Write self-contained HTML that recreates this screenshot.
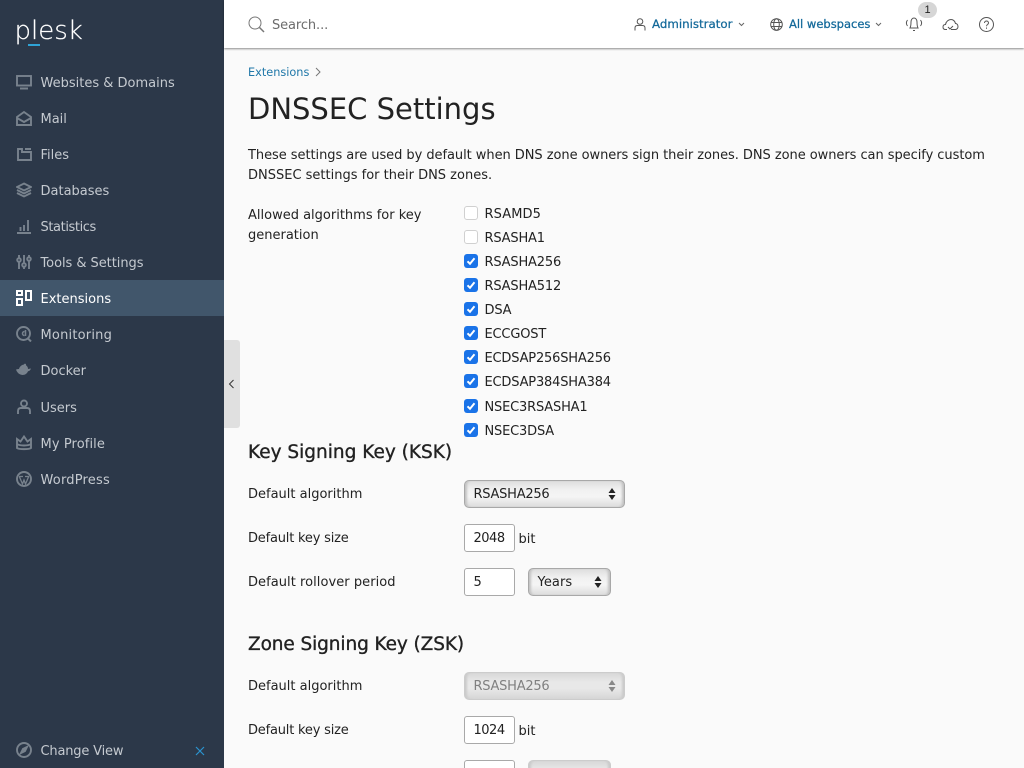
<!DOCTYPE html>
<html lang="en"><head><meta charset="utf-8"><title>DNSSEC Settings</title>
<style>
html,body{margin:0;padding:0;width:1024px;height:768px;overflow:hidden;background:#fafafa}
body{position:relative;font-family:"DejaVu Sans","Liberation Sans",sans-serif;font-size:13px;color:#222}
.t{position:absolute;white-space:nowrap;line-height:20px;height:20px}
#side{position:absolute;left:0;top:0;width:224px;height:768px;background:#2c3849}
#active{position:absolute;left:0;top:280px;width:224px;height:36px;background:#41566b}
.n{left:40.5px;color:#c5cad0;font-size:13px;margin-top:2px}
.i{position:absolute;left:16px;width:16px;height:16px;fill:none;stroke:#78828d;stroke-width:1.9}
#hdr{position:absolute;left:224px;top:0;width:800px;height:48px;background:#fff;box-shadow:0 1px 2px rgba(0,0,0,.45)}
#handle{position:absolute;left:224px;top:340px;width:16px;height:88px;background:#e0e0e0;border-radius:0 3px 3px 0}
.l{left:248px;margin-top:1px}
.p{margin-top:2px}
.cb{position:absolute;left:464px;width:14px;height:14px;border-radius:3px;background:#1a73e8}
.cb.o{background:#fff;box-sizing:border-box;border:1px solid #d0d0d0}
.cb svg{position:absolute;left:0;top:0;width:14px;height:14px}
.a{left:484.5px;margin-top:2px;letter-spacing:-.18px}
.v{margin-top:1px;letter-spacing:-.25px}
.sel{position:absolute;box-sizing:border-box;height:28px;border:1px solid #a8a8a8;border-radius:5px;background:linear-gradient(#dedede,#f1f1f1 35%,#f5f5f5 60%,#dcdcdc);box-shadow:inset 3px 0 2px -1px #c2c2c2,inset -3px 0 2px -1px #c2c2c2}
.sel svg{position:absolute;right:8px;top:7px;width:8px;height:12px}
.sel.d{border-color:#ccc;background:linear-gradient(#d8d8d8,#e8e8e8 35%,#e8e8e8 60%,#d6d6d6);box-shadow:inset 3px 0 2px -1px #cacaca,inset -3px 0 2px -1px #cacaca}
.inp{position:absolute;left:464px;width:51px;height:28px;box-sizing:border-box;background:#fff;border:1px solid #a9a9a9;border-radius:3px}
h1,h2{margin:0;font-weight:400;position:absolute;white-space:nowrap}
h1{left:248px;top:89px;font-size:29px;line-height:40px;color:#222}
h2{left:248px;font-size:18.5px;line-height:26px;color:#222;-webkit-text-stroke:.35px #222}
</style></head><body>
<div id="side">
<div style="position:absolute;left:28px;top:44px;width:12px;height:2px;background:#2fa3d6"></div>
<div class="t" style="left:14.5px;top:11px;height:40px;line-height:40px;font-size:26px;color:#fff;letter-spacing:0;font-family:'DejaVu Sans Light','Liberation Sans',sans-serif;font-weight:200;-webkit-text-stroke:.2px #fff">plesk</div>
<div id="active"></div>
<svg class="i" style="top:74px" viewBox="0 0 16 16"><rect x="1" y="2" width="14" height="9.5"/><path d="M4 14.500h8" stroke-width="2"/></svg>
<div class="t n" style="top:72px">Websites &amp; Domains</div>
<svg class="i" style="top:110px" viewBox="0 0 16 16"><path d="M1 7 8 2l7 5v8H1zM1 8l7 4 7-4"/></svg>
<div class="t n" style="top:108px">Mail</div>
<svg class="i" style="top:146px" viewBox="0 0 16 16"><path d="M2 3h4v3h9v8H2zM9 3h6"/></svg>
<div class="t n" style="top:144px">Files</div>
<svg class="i" style="top:182px" viewBox="0 0 16 16"><path d="M8 1.500 15 5l-7 3.500L1 5zM1 8l7 3.500L15 8M1 11l7 3.500 7-3.500"/></svg>
<div class="t n" style="top:180px">Databases</div>
<svg class="i" style="top:218px" viewBox="0 0 16 16"><path d="M1 15h14M4.500 13V9M8 13V7M12 13V2"/></svg>
<div class="t n" style="top:216px;letter-spacing:-.4px">Statistics</div>
<svg class="i" style="top:254px" viewBox="0 0 16 16"><path d="M3 1v3M3 8v7M8 1v8M8 13v2M13 1v2M13 7v8"/><circle cx="3" cy="6" r="1.800"/><circle cx="8" cy="11" r="1.800"/><circle cx="13" cy="5" r="1.800"/></svg>
<div class="t n" style="top:252px;letter-spacing:-.05px">Tools &amp; Settings</div>
<svg class="i" style="top:290px;stroke:#fff;stroke-width:2" viewBox="0 0 16 16"><rect x="1" y="1" width="5" height="4"/><rect x="1" y="9" width="5" height="6"/><rect x="10" y="1" width="5" height="9"/></svg>
<div class="t n" style="top:288px;color:#fff">Extensions</div>
<svg class="i" style="top:326px" viewBox="0 0 16 16"><circle cx="7.500" cy="7.500" r="6.500"/><path d="M11.500 12l3.500 3.500" stroke-width="2"/><path d="M9.500 4v6M8.500 5.500a2 2 0 1 0 0 4" stroke-width="1.500"/></svg>
<div class="t n" style="top:324px;letter-spacing:.2px">Monitoring</div>
<svg class="i" style="top:362px;stroke:none;fill:#78828d" viewBox="0 0 16 16"><path d="M0 7.500c2-.5 2.500-.5 3-.5.500-2 2-4 5-4.500V1.500l1 .8 1-.8v1.800c1.500 1 2 2.500 2 3.700l3-.5c-.5 1.500-1.500 2.500-3 2.800-1 2.500-3 3.700-5.500 3.700C3 12.500 1 10.500 0 7.500z"/></svg>
<div class="t n" style="top:360px">Docker</div>
<svg class="i" style="top:399px" viewBox="0 0 16 16"><circle cx="8" cy="4.500" r="3"/><path d="M2 15v-3c0-2 1-3 3-3h6c2 0 3 1 3 3v3"/></svg>
<div class="t n" style="top:397px">Users</div>
<svg class="i" style="top:435px" viewBox="0 0 16 16"><path d="M1 4l3.500 2.500L8 1.500l3.500 5L15 4v9c-2 1.500-12 1.500-14 0zM1 9c3 2 11 2 14 0"/></svg>
<div class="t n" style="top:433px;letter-spacing:.1px">My Profile</div>
<svg class="i" style="top:471px" viewBox="0 0 16 16"><circle cx="8" cy="8" r="7"/><path d="M3.500 6l3 7 1.500-4 1.500 4 3-7M3 5.500h4M9 5.500h4" stroke-width="1.300"/></svg>
<div class="t n" style="top:469px;letter-spacing:.2px">WordPress</div>
<svg class="i" style="top:742px" viewBox="0 0 16 16"><circle cx="8" cy="8" r="7"/><path d="M11 5 9 9 5 11l2-4z" fill="#78828d"/></svg>
<div class="t n" style="top:740px;letter-spacing:-.18px">Change View</div>
<svg style="position:absolute;left:195px;top:746px;width:10px;height:10px" viewBox="0 0 10 10"><path d="M1 1l8 8M9 1l-8 8" stroke="#2a93cf" stroke-width="1.200" fill="none"/></svg>
</div>
<div id="hdr"></div>
<svg style="position:absolute;left:248px;top:16px;width:17px;height:17px" viewBox="0 0 17 17" fill="none" stroke="#777"><circle cx="7" cy="7" r="6"/><path d="M11.500 11.500l4.500 4.500" stroke-width="1.500"/></svg>
<div class="t" style="left:272px;top:16px;color:#6c6c6c;font-size:13px;letter-spacing:-.1px">Search...</div>
<svg style="position:absolute;left:634px;top:18px;width:12px;height:13px" viewBox="0 0 12 13" fill="none" stroke="#555"><circle cx="6" cy="3.500" r="2.800"/><path d="M1 12.500V10c0-1.500 1-2.500 2.500-2.500h5C10 7.500 11 8.500 11 10v2.500"/></svg>
<div class="t" style="left:652px;top:14px;color:#13699a;font-size:11.800px;-webkit-text-stroke:.25px #13699a">Administrator</div>
<svg style="position:absolute;left:738px;top:22px;width:7px;height:5px" viewBox="0 0 7 5" fill="none" stroke="#666"><path d="M1 1l2.500 2.500L6 1"/></svg>
<svg style="position:absolute;left:770px;top:18px;width:13px;height:13px" viewBox="0 0 13 13" fill="none" stroke="#555"><circle cx="6.500" cy="6.500" r="5.800"/><ellipse cx="6.500" cy="6.500" rx="2.800" ry="5.800"/><path d="M1 4.500h11M1 8.500h11"/></svg>
<div class="t" style="left:789px;top:14px;color:#13699a;font-size:11.500px;-webkit-text-stroke:.25px #13699a">All webspaces</div>
<svg style="position:absolute;left:875px;top:22px;width:7px;height:5px" viewBox="0 0 7 5" fill="none" stroke="#666"><path d="M1 1l2.500 2.500L6 1"/></svg>
<svg style="position:absolute;left:905px;top:16px;width:18px;height:16px" viewBox="0 0 18 16" fill="none" stroke="#555"><path d="M5 12c1-2 1-4 1-6s1-4 3-4 3 2 3 4 0 4 1 6zM8 14.500h2M2.500 4C1 6 1 8 2.500 10M15.500 4c1.500 2 1.500 4 0 6"/></svg>
<div style="position:absolute;left:918px;top:2px;width:19px;height:16px;border-radius:8px;background:#d6d6d6;color:#222;font-size:11px;line-height:16px;text-align:center;font-family:'Liberation Sans',sans-serif">1</div>
<svg style="position:absolute;left:942px;top:18px;width:17px;height:13px" viewBox="0 0 17 13" fill="none" stroke="#555"><path d="M5 11.500H3.500C2 11.500 1 10.500 1 9s1-2.500 2.500-2.500C4 3.500 6.500 1.500 9 1.500c2 0 4 1.500 4.500 4 1.500 0 2.500 1.500 2.500 3s-1 3-2.500 3H9M6 9l2 2 3-3"/></svg>
<svg style="position:absolute;left:979px;top:17px;width:15px;height:15px" viewBox="0 0 15 15" fill="none" stroke="#555"><circle cx="7.500" cy="7.500" r="7"/><path d="M5.500 6c0-1.200 1-2 2-2s2 .8 2 2c0 1.500-2 1.500-2 3.200M7.500 10.500v1.200"/></svg>

<div class="t" style="left:248px;top:63px;color:#1f77a8;font-size:11.300px">Extensions</div>
<svg style="position:absolute;left:315px;top:67px;width:6px;height:10px" viewBox="0 0 6 10" fill="none" stroke="#777"><path d="M1 1l4 4-4 4"/></svg>
<h1>DNSSEC Settings</h1>
<div class="t l p" style="top:144px;letter-spacing:-.05px">These settings are used by default when DNS zone owners sign their zones. DNS zone owners can specify custom</div>
<div class="t l p" style="top:164px">DNSSEC settings for their DNS zones.</div>
<div class="t l p" style="top:204px">Allowed algorithms for key</div>
<div class="t l p" style="top:224px">generation</div>

<div class="cb o" style="top:206px"></div><div class="t a" style="top:203px;letter-spacing:.1px">RSAMD5</div>
<div class="cb o" style="top:230px"></div><div class="t a" style="top:227px">RSASHA1</div>
<div class="cb" style="top:254px"><svg viewBox="0 0 14 14"><path d="M3.500 7.300 6 9.800l4.500-5.500" fill="none" stroke="#fff" stroke-width="2"/></svg></div><div class="t a" style="top:251px">RSASHA256</div>
<div class="cb" style="top:278px"><svg viewBox="0 0 14 14"><path d="M3.500 7.300 6 9.800l4.500-5.500" fill="none" stroke="#fff" stroke-width="2"/></svg></div><div class="t a" style="top:275px">RSASHA512</div>
<div class="cb" style="top:302px"><svg viewBox="0 0 14 14"><path d="M3.500 7.300 6 9.800l4.500-5.500" fill="none" stroke="#fff" stroke-width="2"/></svg></div><div class="t a" style="top:299px">DSA</div>
<div class="cb" style="top:326px"><svg viewBox="0 0 14 14"><path d="M3.500 7.300 6 9.800l4.500-5.500" fill="none" stroke="#fff" stroke-width="2"/></svg></div><div class="t a" style="top:323px">ECCGOST</div>
<div class="cb" style="top:350px"><svg viewBox="0 0 14 14"><path d="M3.500 7.300 6 9.800l4.500-5.500" fill="none" stroke="#fff" stroke-width="2"/></svg></div><div class="t a" style="top:347px">ECDSAP256SHA256</div>
<div class="cb" style="top:374px"><svg viewBox="0 0 14 14"><path d="M3.500 7.300 6 9.800l4.500-5.500" fill="none" stroke="#fff" stroke-width="2"/></svg></div><div class="t a" style="top:371px">ECDSAP384SHA384</div>
<div class="cb" style="top:399px"><svg viewBox="0 0 14 14"><path d="M3.500 7.300 6 9.800l4.500-5.500" fill="none" stroke="#fff" stroke-width="2"/></svg></div><div class="t a" style="top:396px">NSEC3RSASHA1</div>
<div class="cb" style="top:423px"><svg viewBox="0 0 14 14"><path d="M3.500 7.300 6 9.800l4.500-5.500" fill="none" stroke="#fff" stroke-width="2"/></svg></div><div class="t a" style="top:420px">NSEC3DSA</div>

<div id="handle"><svg style="position:absolute;left:4px;top:39px;width:7px;height:10px" viewBox="0 0 7 10" fill="none" stroke="#333"><path d="M5.500 1 1.500 5l4 4"/></svg></div>

<h2 style="top:440px">Key Signing Key (KSK)</h2>
<div class="t l" style="top:484px">Default algorithm</div>
<div class="sel" style="left:464px;top:480px;width:161px"><svg viewBox="0 0 8 12"><path d="M4 0l3.500 5h-7zM4 12l3.500-5h-7z" fill="#222"/></svg></div>
<div class="t v" style="left:473.500px;top:484px">RSASHA256</div>
<div class="t l" style="top:528px;letter-spacing:-.2px">Default key size</div>
<div class="inp" style="top:524px"></div><div class="t v" style="left:473.500px;top:528px;letter-spacing:-.5px">2048</div><div class="t v" style="left:518.500px;top:529px;letter-spacing:0">bit</div>
<div class="t l" style="top:572px;letter-spacing:.05px">Default rollover period</div>
<div class="inp" style="top:568px"></div><div class="t v" style="left:473.500px;top:572px">5</div>
<div class="sel" style="left:528px;top:568px;width:83px"><svg viewBox="0 0 8 12"><path d="M4 0l3.500 5h-7zM4 12l3.500-5h-7z" fill="#222"/></svg></div>
<div class="t v" style="left:537.500px;top:572px;letter-spacing:.1px">Years</div>

<h2 style="top:632px;letter-spacing:-.1px">Zone Signing Key (ZSK)</h2>
<div class="t l" style="top:676px">Default algorithm</div>
<div class="sel d" style="left:464px;top:672px;width:161px"><svg viewBox="0 0 8 12"><path d="M4 0l3.500 5h-7zM4 12l3.500-5h-7z" fill="#888"/></svg></div>
<div class="t v" style="left:473.500px;top:676px;color:#808080">RSASHA256</div>
<div class="t l" style="top:720px;letter-spacing:-.2px">Default key size</div>
<div class="inp" style="top:716px"></div><div class="t v" style="left:473.500px;top:720px;letter-spacing:-.5px">1024</div><div class="t v" style="left:518.500px;top:721px;letter-spacing:0">bit</div>
<div class="inp" style="top:760px"></div>
<div class="sel d" style="left:528px;top:760px;width:83px"></div>
</body></html>
